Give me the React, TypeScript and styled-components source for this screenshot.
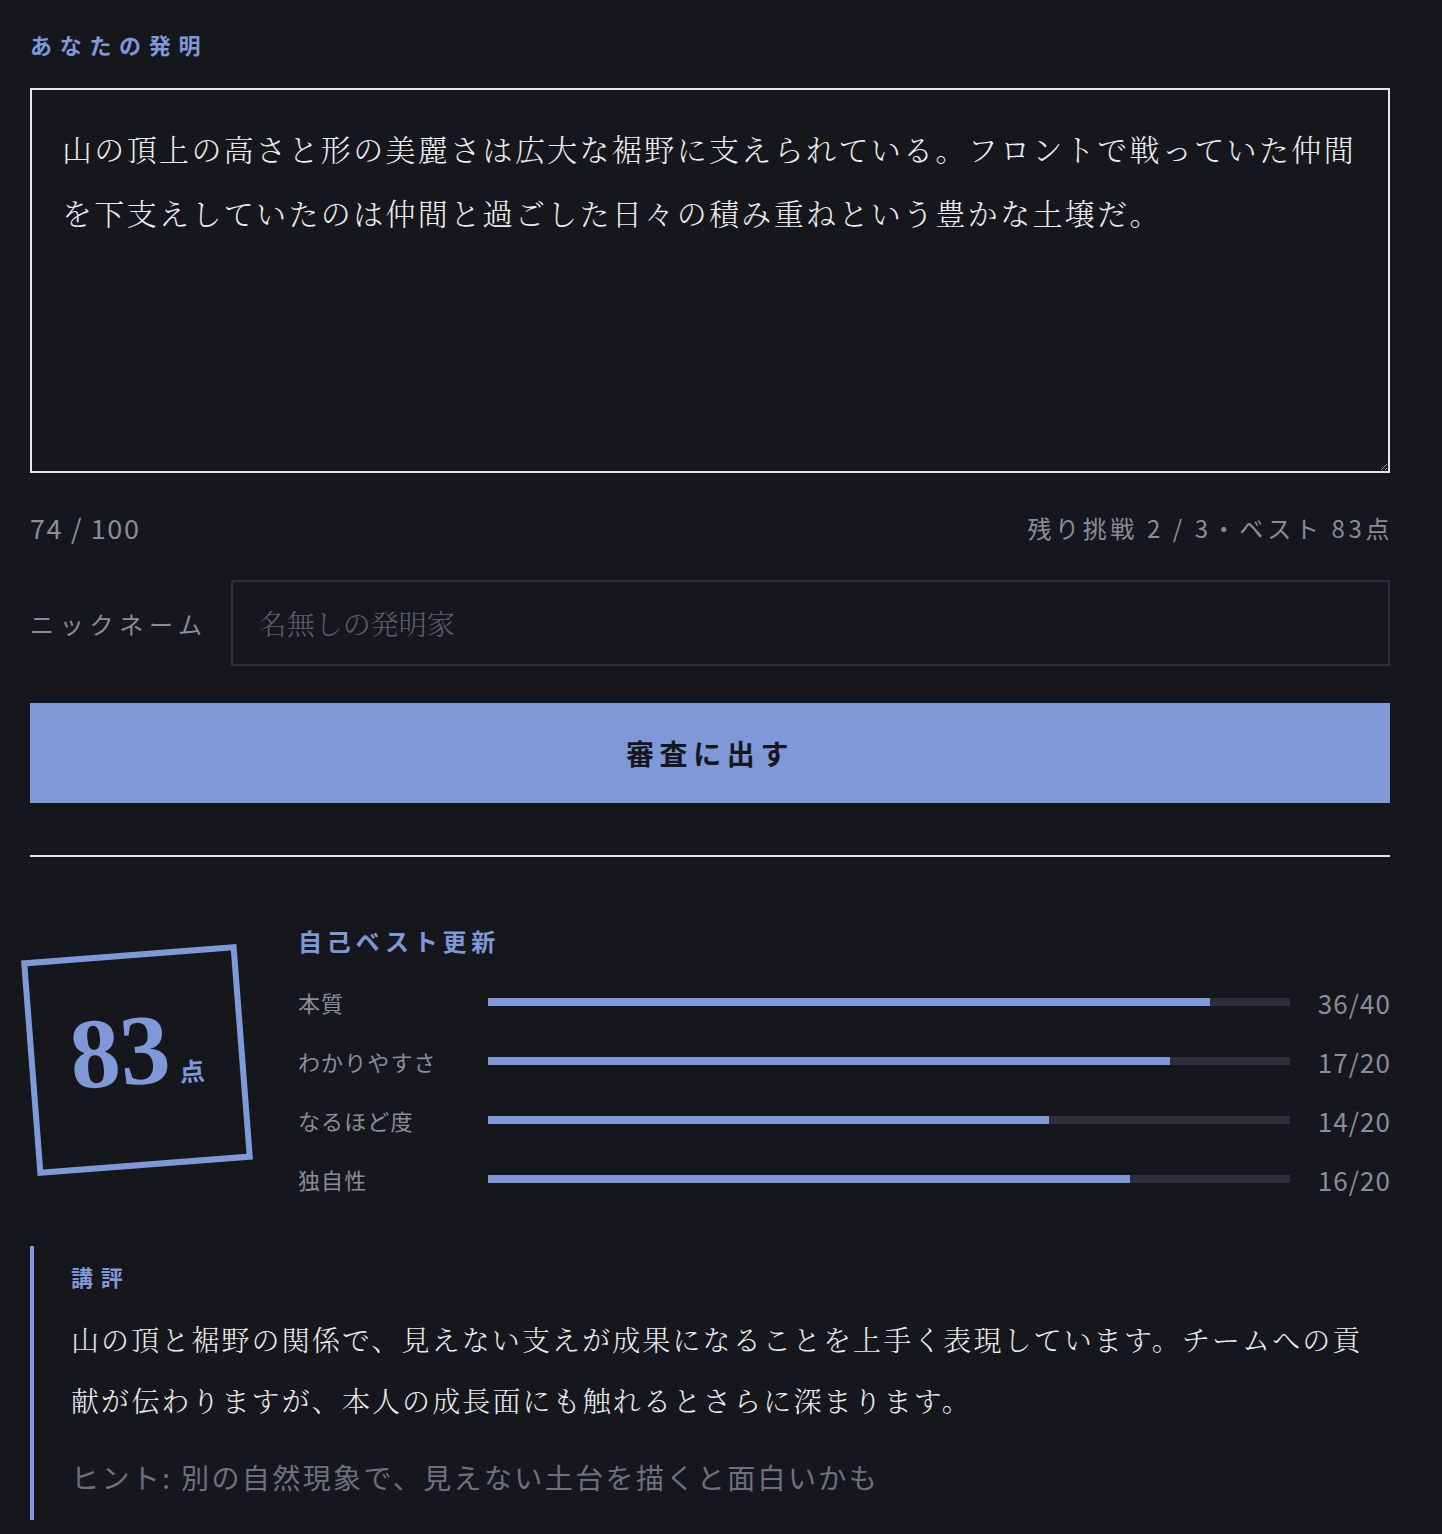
import React from "react";
import styled, { createGlobalStyle } from "styled-components";

const SANS = `"Noto Sans CJK JP", "Noto Sans", sans-serif`;
const SERIF = `"Noto Serif CJK JP", "Noto Sans CJK JP", serif`;
const BLUE = "#7f98d8";
const MUTED = "#8b8d97";

const GlobalStyle = createGlobalStyle`
  html, body {
    margin: 0;
    padding: 0;
    background: #16171c;
  }
  body {
    font-family: ${SANS};
    color: #e8e8ea;
  }
`;

const Page = styled.main`
  width: 1360px;
  margin-left: 30px;
  padding: 28px 0 17px;
`;

const SectionLabel = styled.div<{ $size?: number; $spacing?: number }>`
  font-size: ${(p) => p.$size ?? 22}px;
  line-height: 32px;
  font-weight: 700;
  letter-spacing: ${(p) => p.$spacing ?? 0.35}em;
  color: ${BLUE};
`;

const Essay = styled.textarea`
  display: block;
  box-sizing: border-box;
  width: 100%;
  height: 385px;
  margin-top: 28px;
  padding: 26px 30px;
  border: 2px solid #e6e6e6;
  border-radius: 0;
  background: transparent;
  color: #ececee;
  color-scheme: dark;
  font-family: ${SERIF};
  font-weight: 300;
  font-size: 30px;
  line-height: 64px;
  letter-spacing: 2.35px;
  resize: vertical;
  outline: none;
`;

const MetaRow = styled.div`
  display: flex;
  justify-content: space-between;
  align-items: center;
  height: 40px;
  margin-top: 34px;
  color: ${MUTED};
`;

const Counter = styled.span`
  font-size: 27px;
  letter-spacing: 0.06em;
`;

const Attempts = styled.span`
  font-size: 24px;
  letter-spacing: 0.15em;
  margin-right: -3px;
`;

const NickRow = styled.label`
  display: flex;
  align-items: center;
  gap: 23px;
  margin-top: 33px;
`;

const NickLabel = styled.span`
  font-size: 24px;
  letter-spacing: 0.24em;
  color: ${MUTED};
  white-space: nowrap;
`;

const NickInput = styled.input`
  flex: 1;
  box-sizing: border-box;
  height: 86px;
  padding: 0 26px;
  border: 2px solid #2e3039;
  background: transparent;
  color: #e8e8ea;
  font-family: ${SERIF};
  font-weight: 300;
  font-size: 28px;
  outline: none;
  &::placeholder {
    color: #5d5f68;
  }
`;

const SubmitButton = styled.button`
  display: block;
  width: 100%;
  height: 100px;
  margin-top: 37px;
  border: none;
  background: ${BLUE};
  color: #16171c;
  font-family: ${SANS};
  font-size: 28px;
  font-weight: 700;
  letter-spacing: 0.2em;
  cursor: pointer;
`;

const Divider = styled.hr`
  height: 2px;
  margin: 52px 0 0;
  border: none;
  background: #e6e6e6;
`;

const Result = styled.section`
  display: flex;
  align-items: center;
  gap: 53px;
  margin-top: 68px;
`;

const Stamp = styled.div`
  flex: none;
  box-sizing: border-box;
  width: 216px;
  height: 216px;
  margin-left: -1px;
  margin-top: -4px;
  border: 6px solid ${BLUE};
  transform: rotate(-4.4deg);
  display: flex;
  align-items: center;
  justify-content: center;
  color: ${BLUE};
`;

const StampScore = styled.span`
  font-family: "Liberation Serif", "DejaVu Serif", serif;
  font-weight: 700;
  font-size: 100px;
  line-height: 1;
  margin-top: -18px;
`;

const StampUnit = styled.span`
  font-family: ${SANS};
  font-size: 25px;
  font-weight: 700;
  margin-left: 8px;
  margin-top: 28px;
`;

const Breakdown = styled.div`
  flex: 1;
  display: flex;
  flex-direction: column;
`;

const Rows = styled.div`
  display: flex;
  flex-direction: column;
  gap: 19px;
  margin-top: 25px;
`;

const Row = styled.div`
  display: grid;
  grid-template-columns: 189px 1fr 100px;
  align-items: center;
  height: 40px;
`;

const RowLabel = styled.span`
  font-size: 22px;
  letter-spacing: 0.05em;
  color: ${MUTED};
`;

const Track = styled.div`
  height: 8px;
  margin-left: 1px;
  background: #2c2e39;
`;

const Fill = styled.div`
  height: 100%;
  background: ${BLUE};
`;

const RowValue = styled.span`
  text-align: right;
  font-size: 26px;
  letter-spacing: 0.04em;
  margin-right: -1px;
  color: ${MUTED};
`;

const Review = styled.section`
  margin-top: 47px;
  padding: 14px 20px 23px 37px;
  border-left: 4px solid ${BLUE};
`;

const ReviewText = styled.p`
  margin: 17px 0 0;
  font-family: ${SERIF};
  font-weight: 300;
  font-size: 28px;
  line-height: 61px;
  letter-spacing: 2.1px;
  color: #ececee;
`;

const Hint = styled.p`
  margin: 26px 0 0;
  font-size: 28px;
  line-height: 40px;
  letter-spacing: 2.4px;
  color: #6e717c;
`;

const essay =
  "山の頂上の高さと形の美麗さは広大な裾野に支えられている。フロントで戦っていた仲間を下支えしていたのは仲間と過ごした日々の積み重ねという豊かな土壌だ。";

const scores = [
  { label: "本質", value: 36, max: 40 },
  { label: "わかりやすさ", value: 17, max: 20 },
  { label: "なるほど度", value: 14, max: 20 },
  { label: "独自性", value: 16, max: 20 },
];

export default function App() {
  return (
    <>
      <GlobalStyle />
      <Page>
        <SectionLabel>あなたの発明</SectionLabel>
        <Essay value={essay} readOnly />
        <MetaRow>
          <Counter>74 / 100</Counter>
          <Attempts>残り挑戦 2 / 3・ベスト 83点</Attempts>
        </MetaRow>
        <NickRow>
          <NickLabel>ニックネーム</NickLabel>
          <NickInput placeholder="名無しの発明家" />
        </NickRow>
        <SubmitButton>審査に出す</SubmitButton>
        <Divider />
        <Result>
          <Stamp>
            <StampScore>83</StampScore>
            <StampUnit>点</StampUnit>
          </Stamp>
          <Breakdown>
            <SectionLabel $size={24} $spacing={0.2}>
              自己ベスト更新
            </SectionLabel>
            <Rows>
              {scores.map((s) => (
                <Row key={s.label}>
                  <RowLabel>{s.label}</RowLabel>
                  <Track>
                    <Fill style={{ width: `${(s.value / s.max) * 100}%` }} />
                  </Track>
                  <RowValue>
                    {s.value}/{s.max}
                  </RowValue>
                </Row>
              ))}
            </Rows>
          </Breakdown>
        </Result>
        <Review>
          <SectionLabel>講評</SectionLabel>
          <ReviewText>
            山の頂と裾野の関係で、見えない支えが成果になることを上手く表現しています。チームへの貢献が伝わりますが、本人の成長面にも触れるとさらに深まります。
          </ReviewText>
          <Hint>ヒント: 別の自然現象で、見えない土台を描くと面白いかも</Hint>
        </Review>
      </Page>
    </>
  );
}
